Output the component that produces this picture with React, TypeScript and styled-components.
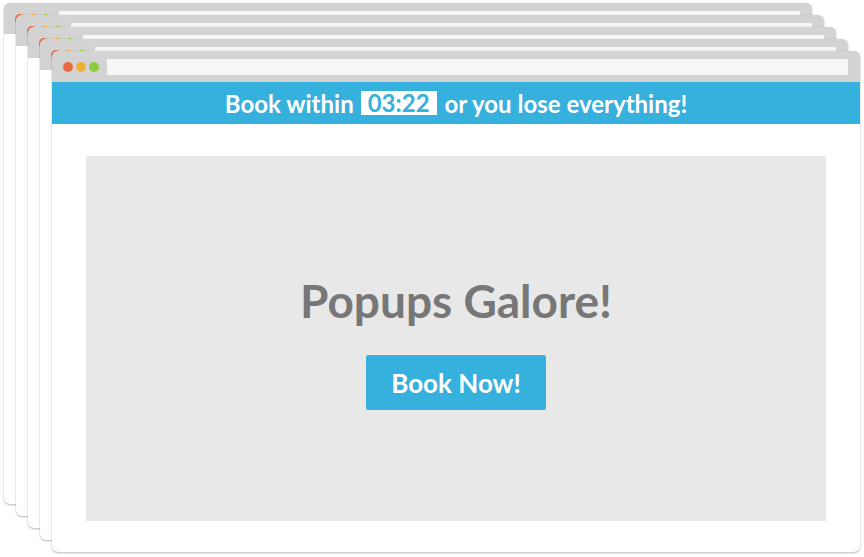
import React from "react";
import styled, { createGlobalStyle } from "styled-components";

const Global = createGlobalStyle`
  html, body { margin: 0; padding: 0; background: #ffffff; }
  body { font-family: Lato, "Open Sans", sans-serif; }
`;

const Stage = styled.div`
  position: relative;
  width: 864px;
  height: 557px;
  overflow: hidden;
  background: #ffffff;
`;

const Window = styled.div<{ $i: number }>`
  position: absolute;
  left: ${(p) => 4 + p.$i * 12}px;
  top: ${(p) => 3 + p.$i * 12}px;
  width: 808px;
  height: 501px;
  background: #ffffff;
  border-radius: 6px;
  box-shadow: 0 1px 2px rgba(0, 0, 0, 0.25), 0 0 1px rgba(0, 0, 0, 0.22);
  overflow: hidden;
  display: flex;
  flex-direction: column;
`;

const TitleBar = styled.div`
  height: 31px;
  flex: none;
  background: #d3d3d3;
  display: flex;
  align-items: center;
  padding: 0 12px 0 11px;
  gap: 3px;
  box-sizing: border-box;
`;

const Dot = styled.span<{ $c: string }>`
  width: 10px;
  height: 10px;
  border-radius: 50%;
  background: ${(p) => p.$c};
  flex: none;
`;

const Address = styled.div`
  flex: 1;
  height: 16px;
  margin-left: 5px;
  background: #f6f6f6;
`;

const Banner = styled.div`
  height: 42px;
  flex: none;
  background: #36b0dc;
  color: #ffffff;
  font-weight: 700;
  font-size: 24px;
  display: flex;
  align-items: center;
  justify-content: center;
  white-space: nowrap;
`;

const Timer = styled.span`
  background: #ffffff;
  color: #36b0dc;
  padding: 0 7px;
  margin: 0 8px 0 7px;
  line-height: 24px;
`;

const Body = styled.div`
  flex: 1;
  padding: 32px 34px 31px 34px;
  display: flex;
`;

const Panel = styled.div`
  flex: 1;
  background: #e8e8e8;
  display: flex;
  flex-direction: column;
  align-items: center;
  justify-content: center;
  padding-top: 6px;
`;

const Title = styled.h1`
  margin: 0;
  font-size: 46px;
  font-weight: 700;
  color: #777777;
  line-height: 56px;
`;

const Button = styled.button`
  margin-top: 26px;
  width: 180px;
  height: 55px;
  border: none;
  border-radius: 2px;
  background: #36b0dc;
  color: #ffffff;
  font-family: Lato, sans-serif;
  font-weight: 700;
  font-size: 26px;
  cursor: pointer;
`;

export default function App() {
  const windows = [0, 1, 2, 3, 4];
  return (
    <>
      <Global />
      <Stage>
        {windows.map((i) => (
          <Window key={i} $i={i}>
            <TitleBar>
              <Dot $c="#eb6a42" />
              <Dot $c="#efae35" />
              <Dot $c="#8ccb3e" />
              <Address />
            </TitleBar>
            {i === 4 && (
              <>
                <Banner>
                  Book within<Timer>03:22</Timer>or you lose everything!
                </Banner>
                <Body>
                  <Panel>
                    <Title>Popups Galore!</Title>
                    <Button>Book Now!</Button>
                  </Panel>
                </Body>
              </>
            )}
          </Window>
        ))}
      </Stage>
    </>
  );
}
